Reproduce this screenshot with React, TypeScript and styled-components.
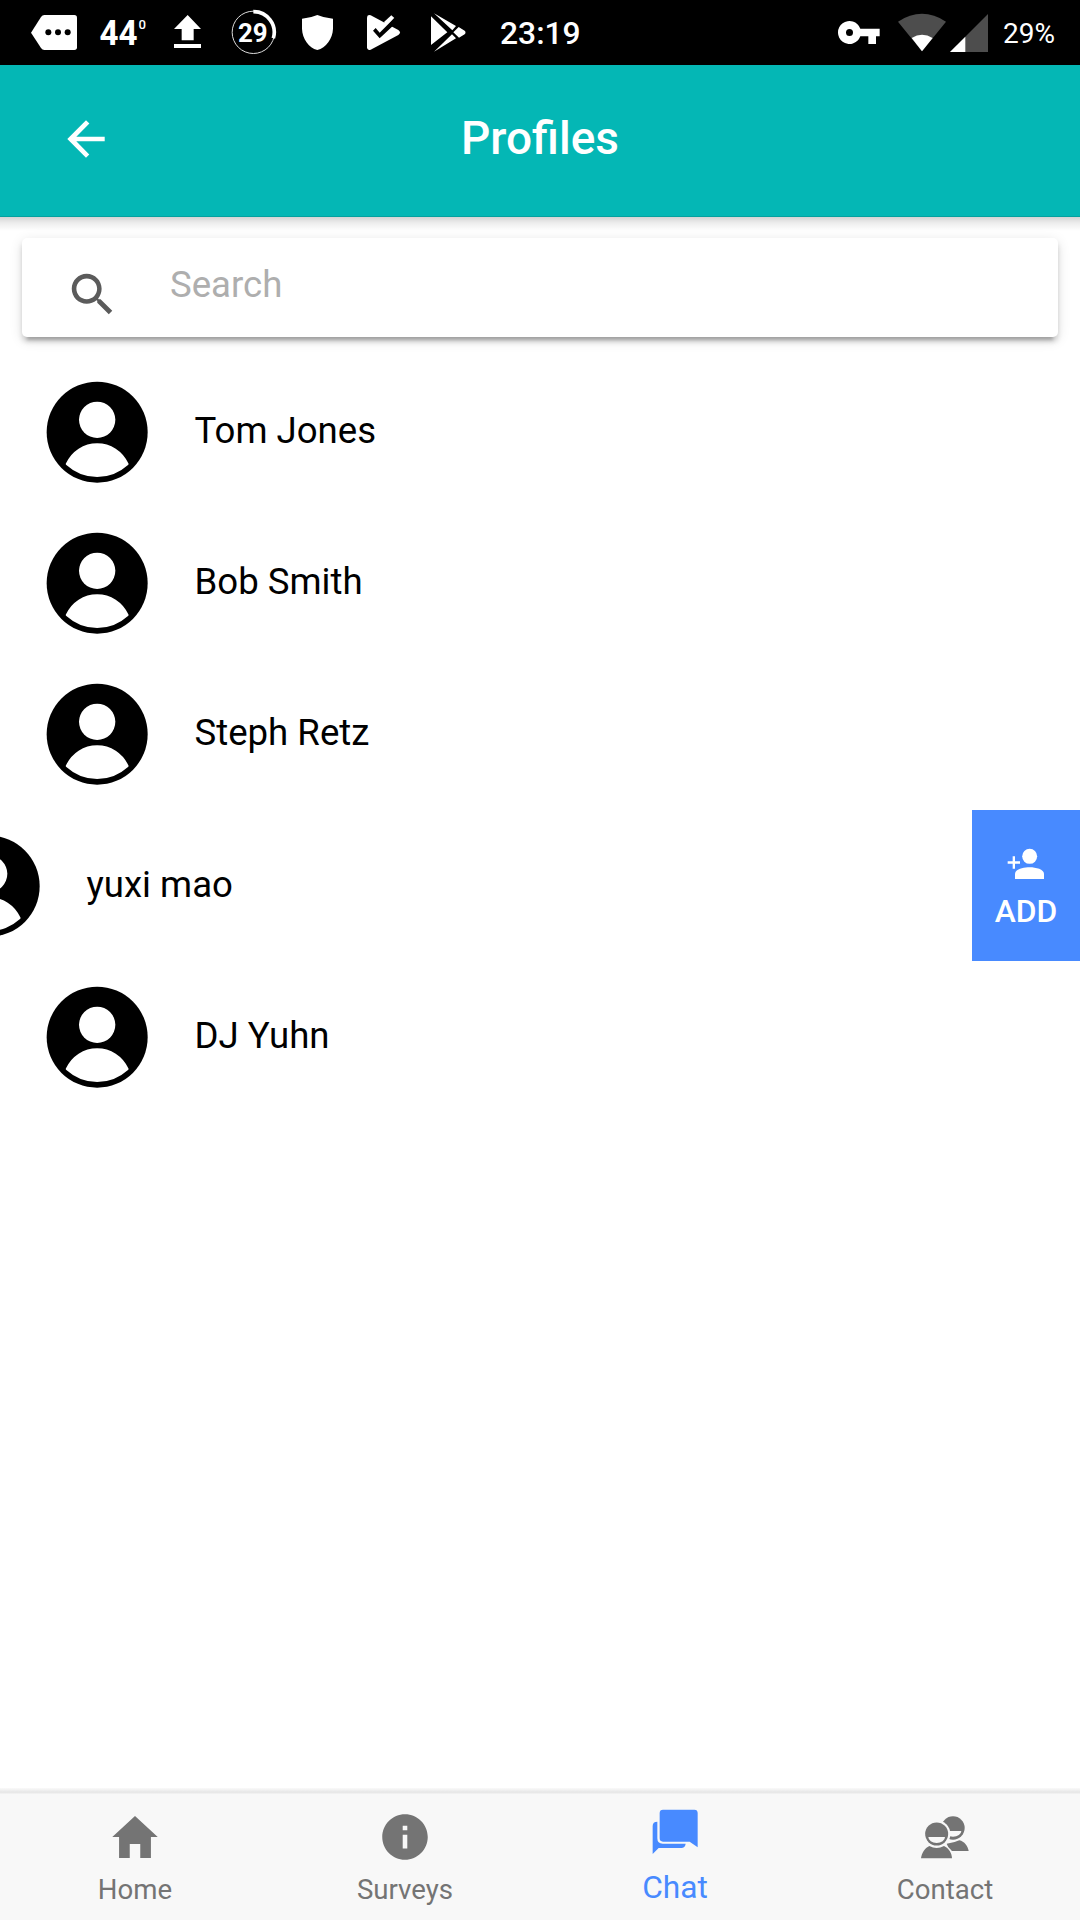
import React from "react";
import styled, { createGlobalStyle } from "styled-components";
import { IoMdHome, IoMdInformationCircle, IoMdSearch, IoMdArrowBack } from "react-icons/io";

const GlobalStyle = createGlobalStyle`
  * { box-sizing: border-box; }
  html, body { margin: 0; padding: 0; background: #fff; }
  body { font-family: Roboto, "Noto Sans", sans-serif; overflow: hidden; }
`;

const Screen = styled.div`
  width: 1080px;
  height: 1920px;
  display: flex;
  flex-direction: column;
  background: #fff;
  overflow: hidden;
`;

const StatusBar = styled.div`
  height: 65px;
  flex: none;
  display: flex;
  background: #000;
  color: #fff;
`;

const StatusIcon = styled.svg<{ $gap: number }>`
  flex: none;
  display: block;
  margin-left: ${(p) => p.$gap}px;
`;

const StatusText = styled.div<{ $gap: number; $width: number; $size: number; $weight: number }>`
  flex: none;
  margin-left: ${(p) => p.$gap}px;
  width: ${(p) => p.$width}px;
  font-size: ${(p) => p.$size}px;
  font-weight: ${(p) => p.$weight};
  line-height: 67px;
  white-space: nowrap;
`;

const Header = styled.header`
  height: 152px;
  flex: none;
  display: grid;
  grid-template-columns: 172px 1fr 172px;
  padding-bottom: 6px;
  align-items: center;
  color: #fff;
  background: #04b7b5;
  border-bottom: 1px solid #04a19f;
`;

const BackButton = styled.button`
  display: flex;
  justify-content: center;
  padding: 2px 0 0;
  border: 0;
  background: none;
  color: inherit;
`;

const Title = styled.h1`
  margin: 0;
  text-align: center;
  font-size: 46px;
  font-weight: 500;
  line-height: 54px;
`;

const Content = styled.main`
  flex: 1;
  background: linear-gradient(rgba(0, 0, 0, 0.17), rgba(0, 0, 0, 0.07) 6px, rgba(0, 0, 0, 0) 14px) top / 100% 14px no-repeat;
`;

const SearchArea = styled.div`
  height: 139px;
  padding: 21px 22px 19px;
`;

const SearchField = styled.div`
  display: flex;
  height: 99px;
  padding-left: 43px;
  border-radius: 5px;
  background: #fff;
  color: #5b5b5b;
  box-shadow: 0 5px 5px 0 rgba(0, 0, 0, 0.14), 0 8px 3px -5px rgba(0, 0, 0, 0.2),
    0 3px 13px 0 rgba(0, 0, 0, 0.12);
  svg { margin-top: 29px; flex: none; }
`;

const SearchLabel = styled.span`
  margin-left: 51px;
  font-size: 36.6px;
  line-height: 93px;
  color: #aeaeae;
`;

const List = styled.ul`
  margin: 0;
  padding: 0;
  list-style: none;
`;

const Row = styled.li`
  display: flex;
  height: 151.3px;
  overflow: hidden;
`;

const RowBody = styled.div<{ $open: boolean }>`
  flex: none;
  width: 1080px;
  margin-left: ${(p) => (p.$open ? -108 : 0)}px;
  padding-left: 46px;
  display: flex;
  align-items: center;
`;

const Name = styled.span`
  margin-left: 46.5px;
  font-size: 36.6px;
  line-height: 44px;
  color: #000;
  padding-bottom: 2px;
`;

const AddButton = styled.button`
  flex: none;
  width: 108px;
  padding: 38px 0 0;
  border: 0;
  display: flex;
  flex-direction: column;
  align-items: center;
  background: #488aff;
  color: #fff;
  font: 500 31.8px/36px Roboto, "Noto Sans", sans-serif;
  svg { margin-bottom: 13px; }
`;

const Tabs = styled.nav`
  flex: none;
  height: 132px;
  display: grid;
  grid-template-columns: repeat(4, 1fr);
  padding-top: 5px;
  background: linear-gradient(#fafafa, #e7e7e7 4px, #e9e9e9 5px, #f8f8f8 6px);
`;

const Tab = styled.div<{ $active: boolean }>`
  display: flex;
  flex-direction: column;
  align-items: center;
  padding-top: ${(p) => (p.$active ? 15 : 20)}px;
  color: ${(p) => (p.$active ? "#488aff" : "#747474")};
  font-size: ${(p) => (p.$active ? 31.7 : 27.6)}px;
  line-height: 36px;
`;

const TabIcon = styled.div<{ $active: boolean }>`
  height: 48px;
  display: flex;
  align-items: center;
  margin-bottom: ${(p) => (p.$active ? 14 : 11)}px;
`;

const Avatar = () => (
  <svg width="102" height="102" viewBox="0 0 306 306">
    <circle cx="153.5" cy="153.5" r="151.5" fill="#000" />
    <circle cx="153.5" cy="116.5" r="54.5" fill="#fff" />
    <path d="M60 247A102.500 102.500 0 0 1 247 247Q249 250 246 252A137 137 0 0 1 61 252Q58 250 60 247Z" fill="#fff" />
  </svg>
);

const PersonAddIcon = () => (
  <svg width="38" height="32" viewBox="201 204 114 96" fill="currentColor">
    <circle cx="269" cy="229" r="22.5" />
    <path d="M225 297V282C225 268 250 262 269 262S312 268 312 282V297Z" />
    <path d="M218 229h7v15h15v7h-15v15h-7v-15h-15v-7h15z" />
  </svg>
);

const ChatIcon = () => (
  <svg width="48" height="48" viewBox="152 83 144 144" fill="currentColor">
    <path d="M188 88H282Q292 88 292 98V201L268 184H188Q178 184 178 174V98Q178 88 188 88Z" />
    <path d="M171 124V174Q171 190 187 190H256Q254 203 243 203H175L157 221V137Q157 124 171 124Z" />
  </svg>
);

const ContactsIcon = () => (
  <svg width="50" height="48" viewBox="960 98 150 144" fill="currentColor">
    <circle cx="1059" cy="143" r="35" />
    <path d="M1034 152H1084A25 17 0 0 1 1034 152Z" fill="#f8f8f8" />
    <path d="M1040 190Q1062 188 1078 180C1093 183 1104 198 1106 212H1050Z" />
    <circle cx="1010" cy="161" r="41" fill="#f8f8f8" />
    <path d="M1032 194Q1050 201 1058 216L1063 238H1050L1030 200Z" fill="#f8f8f8" />
    <circle cx="1010" cy="161" r="34.5" />
    <path d="M985 170H1035A25 18 0 0 1 985 170Z" fill="#f8f8f8" />
    <path d="M988 197Q1010 209 1032 197C1046 203 1056 219 1056 234H963C965 219 974 203 988 197Z" />
  </svg>
);

const people = ["Tom Jones", "Bob Smith", "Steph Retz", "yuxi mao", "DJ Yuhn"];

const tabs = [
  { label: "Home", icon: <IoMdHome size={56} /> },
  { label: "Surveys", icon: <IoMdInformationCircle size={56} /> },
  { label: "Chat", icon: <ChatIcon /> },
  { label: "Contact", icon: <ContactsIcon /> },
];

export default function App() {
  return (
    <Screen>
      <GlobalStyle />
      <StatusBar>
        <StatusIcon $gap={31} width="46" height="65" viewBox="93 0 138 195">
          <path d="M133 45H223Q231 45 231 53V142Q231 150 223 150H133Q127 150 123 144L93 98L123 51Q127 45 133 45Z" fill="#fff" />
          <circle cx="145" cy="97" r="9" />
          <circle cx="174" cy="97" r="9" />
          <circle cx="203" cy="97" r="9" />
        </StatusIcon>
        <StatusIcon $gap={22} width="52" height="65" viewBox="99 0 52 65" fill="#fff" fontFamily="Roboto">
          <text x="99.6" y="44.500" fontSize="34.500" fontWeight="700" textLength="38" lengthAdjust="spacingAndGlyphs">44</text>
          <text x="138.500" y="28.500" fontSize="12.500" fontWeight="500" textLength="7.500" lengthAdjust="spacingAndGlyphs">0</text>
        </StatusIcon>
        <StatusIcon $gap={23} width="27" height="65" viewBox="522 0 81 195" fill="#fff">
          <path d="M563 45L603 87H581V121H545V87H522ZM522 132H603V144H522Z" />
        </StatusIcon>
        <StatusIcon $gap={30} width="46" height="65" viewBox="693 0 138 195">
          <circle cx="760" cy="97" r="63.5" fill="none" stroke="#ddd" strokeWidth="3" />
          <path d="M760 35A62 62 0 0 1 820 115" fill="none" stroke="#fff" strokeWidth="11" />
          <text x="714" y="127" fill="#fff" fontFamily="Roboto" fontSize="80" fontWeight="700" textLength="89" lengthAdjust="spacingAndGlyphs">29</text>
        </StatusIcon>
        <StatusIcon $gap={25} width="31" height="65" viewBox="36 0 93 195" fill="#fff">
          <path d="M82 45Q102 54 129 56V86C128 116 108 143 82 150C56 143 37 116 36 86V56Q62 54 82 45Z" />
        </StatusIcon>
        <StatusIcon $gap={34} width="34" height="65" viewBox="231 0 102 195">
          <path d="M242 46L325 90Q335 98 325 105L242 149Q231 153 231 142V53Q231 42 242 46Z" fill="#fff" />
          <path d="M282 66L304 46L313 54L290 80Z" fill="#fff" />
          <path d="M249 92L257 84L269 98L313 54L322 66L306 80L269 115Z" />
        </StatusIcon>
        <StatusIcon $gap={30} width="35" height="65" viewBox="423 0 105 195" fill="#fff">
          <path d="M423 49L472 97L423 135ZM432 40L498 78L487 91ZM506 81L524 92Q529 97 524 103L507 113L490 97ZM486 103L498 115L432 155Z" />
        </StatusIcon>
        <StatusText $gap={34} $width={338} $size={31.8} $weight={500}>23:19</StatusText>
        <StatusIcon $gap={0} width="42" height="65" viewBox="113 0 126 195" fill="#fff">
          <path fillRule="evenodd" d="M180 86H238V109H227V132H204V109H180A34.500 34.500 0 1 1 180 86ZM158 97.500A10.500 10.500 0 1 0 137 97.500A10.500 10.500 0 1 0 158 97.500Z" />
        </StatusIcon>
        <StatusIcon $gap={18} width="48" height="65" viewBox="293 0 144 195">
          <path d="M365 154L293 65Q365 18 437 65Z" fill="#4d4d4d" />
          <path d="M365 154L334 114Q365 94 397 114Z" fill="#fff" />
        </StatusIcon>
        <StatusIcon $gap={4} width="38" height="65" viewBox="449 0 114 195">
          <path d="M563 42V156H449Z" fill="#4d4d4d" />
          <path d="M495 110V156H449Z" fill="#fff" />
        </StatusIcon>
        <StatusText $gap={15} $width={60} $size={28} $weight={400}>29%</StatusText>
      </StatusBar>

      <Header>
        <BackButton aria-label="Back"><IoMdArrowBack size={56} /></BackButton>
        <Title>Profiles</Title>
      </Header>

      <Content>
        <SearchArea>
          <SearchField>
            <IoMdSearch size={54} />
            <SearchLabel>Search</SearchLabel>
          </SearchField>
        </SearchArea>
        <List>
          {people.map((name) => {
            const open = name === "yuxi mao";
            return (
              <Row key={name}>
                <RowBody $open={open}>
                  <Avatar />
                  <Name>{name}</Name>
                </RowBody>
                {open && (
                  <AddButton>
                    <PersonAddIcon />
                    ADD
                  </AddButton>
                )}
              </Row>
            );
          })}
        </List>
      </Content>

      <Tabs>
        {tabs.map((t) => {
          const active = t.label === "Chat";
          return (
            <Tab key={t.label} $active={active}>
              <TabIcon $active={active}>{t.icon}</TabIcon>
              {t.label}
            </Tab>
          );
        })}
      </Tabs>
    </Screen>
  );
}
